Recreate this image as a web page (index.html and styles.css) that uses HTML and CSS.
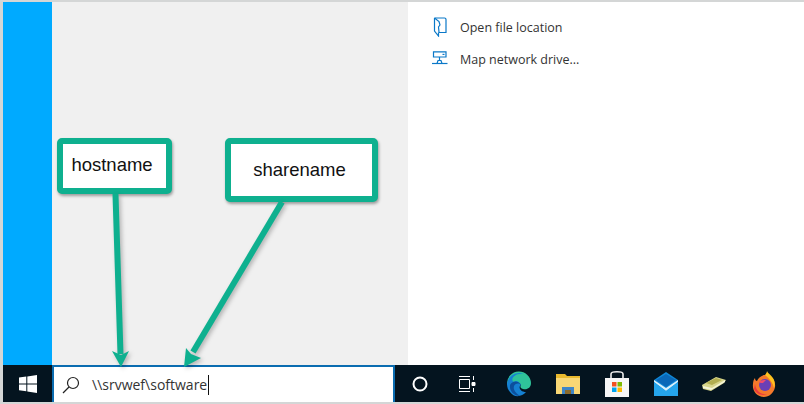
FILE: index.html
```html
<!DOCTYPE html>
<html lang="en">
<head>
    <meta charset="UTF-8">
    <meta name="viewport" content="width=device-width, initial-scale=1.0">
    <title>Search share</title>
    <link rel="stylesheet" href="styles.css">
</head>
<body>
    <div class="screen">
        <div class="menu">
            <div class="tiles"></div>
            <div class="results"></div>
            <div class="actions">
                <div class="action">
                    <svg class="action-icon" width="16" height="20" viewBox="0 0 16 20" fill="none" stroke="#0a78c8" stroke-width="1.2">
                        <path d="M2.500 1H12.500C13.500 1 14 1.500 14 2.500V15.500H6.500"/>
                        <path d="M2.500 1V14L6.500 19V15.500"/>
                        <path d="M2.500 1L7 4.500L8 8L6.500 10L7 15"/>
                    </svg>
                    <span>Open file location</span>
                </div>
                <div class="action">
                    <svg class="action-icon" width="16" height="16" viewBox="0 0 16 16" fill="none" stroke="#0a78c8" stroke-width="1.200">
                        <path d="M1.500 0.800H14V6H1.500Z"/>
                        <path d="M10.500 3.400H12.500"/>
                        <path d="M7.500 6V9M5 12.500L6 9.500H9L10 12.500"/>
                        <path d="M0 12.500H15.500"/>
                    </svg>
                    <span>Map network drive...</span>
                </div>
            </div>
        </div>
        <div class="taskbar">
            <div class="start">
                <svg width="18" height="18" viewBox="0 0 18 18" fill="#fff">
                    <path d="M0 2.600L7.300 1.600V8.400H0Z"/>
                    <path d="M8.300 1.400L18 0V8.400H8.300Z"/>
                    <path d="M0 9.400H7.300V16.300L0 15.300Z"/>
                    <path d="M8.300 9.400H18V18L8.300 16.500Z"/>
                </svg>
            </div>
            <div class="search">
                <svg width="18" height="18" viewBox="0 0 18 18" fill="none" stroke="#222" stroke-width="1.200">
                    <circle cx="11" cy="7" r="5.500"/>
                    <path d="M7 11L1 17"/>
                </svg>
                <span class="query">\\srvwef\software</span>
            </div>
            <div class="tray">
                <svg class="tray-cortana" width="18" height="18" viewBox="0 0 18 18" fill="none" stroke="#fff" stroke-width="2">
                    <circle cx="9" cy="9" r="6.500"/>
                </svg>
                <svg class="tray-view" width="18" height="16" viewBox="0 0 18 16" fill="none" stroke="#fff" stroke-width="1">
                    <path d="M1 .5H12M1 15.500H12M1.500 3.500H11.500V12.500H1.500Z"/>
                    <path d="M15.500 0V4M15.500 12V16"/>
                    <path d="M14 6.500H17V9.500H14Z" fill="#fff"/>
                </svg>
                <svg class="tray-edge" width="26" height="26" viewBox="0 0 26 26">
                    <path d="M1 13A12 12 0 0 1 25 12C25 17 21 19 17 18C14 17 14 15 15 14C13 10 6 10 4 14C3 15 2 15 1 13Z" fill="#2fc39a"/>
                    <path d="M1 13C2 5 10 0 18 3C10 1 3 8 8 11C10 9 13 10 15 14C12 16 14 21 20 21C16 26 8 27 4 21C2 19 1 16 1 13Z" fill="#1580d2"/>
                    <path d="M4 14C6 10 12 9 15 14C13 12 10 12 8 15C7 18 9 22 14 25C8 25 3 20 4 14Z" fill="#0c4f9c"/>
                </svg>
                <svg class="tray-folder" width="24" height="22" viewBox="0 0 24 22">
                    <path d="M0 1H9L11 3H24V21H0Z" fill="#e9b92e"/>
                    <path d="M0 5H24V21H0Z" fill="#f8d775"/>
                    <path d="M6 14H18V21H15V17H9V21H6Z" fill="#3f86c7"/>
                    <path d="M9 17H15V21H9Z" fill="#8a6a2c"/>
                </svg>
                <svg class="tray-store" width="24" height="26" viewBox="0 0 24 26">
                    <path d="M6 8V3C6 1 8 .8 12 .8S18 1 18 3V8" fill="none" stroke="#eee" stroke-width="1.600"/>
                    <path d="M0 7H24V26H0Z" fill="#f6f6f6"/>
                    <path d="M7 11H11.500V15.500H7Z" fill="#f25022"/>
                    <path d="M12.500 11H17V15.500H12.500Z" fill="#7fba00"/>
                    <path d="M7 16.500H11.500V21H7Z" fill="#00a4ef"/>
                    <path d="M12.500 16.500H17V21H12.500Z" fill="#ffb900"/>
                </svg>
                <svg class="tray-mail" width="24" height="24" viewBox="0 0 24 24">
                    <path d="M0 8L12 0L24 8V24H0Z" fill="#1088d8"/>
                    <path d="M2 8L12 2L22 8L12 15Z" fill="#0a68b8"/>
                    <path d="M0 8L12 16L24 8V10L12 19L0 10Z" fill="#d8f0fb"/>
                    <path d="M0 24V10L12 19L24 10V24Z" fill="#25a5ec"/>
                </svg>
                <svg class="tray-book" width="24" height="16" viewBox="0 0 24 16">
                    <path d="M0 9L14 1L24 4L22 7L9 15L1 13Z" fill="#d8d68c"/>
                    <path d="M1 10L10 12L23 4L23 6L9 14L1 12Z" fill="#f4f4d8"/>
                    <path d="M4 7L14 2L20 4L10 9Z" fill="#b2ae50"/>
                </svg>
                <svg class="tray-fox" width="24" height="26" viewBox="0 0 24 26">
                    <path d="M12 4C19 3 24 9 23 16C22 22 17 26 12 26C5 26 0 20 1 13C1 10 2 8 3 7C3 9 4 10 5 10C6 7 9 5 12 4Z" fill="#f4792b"/>
                    <path d="M13 4C14 3 15 1 15 0C16 3 20 4 22 9C23 12 23 15 22 17C21 12 18 8 13 4Z" fill="#ffc21f"/>
                    <path d="M3 13C4 20 9 24 15 23C11 25 5 24 2 18Z" fill="#ec3a3e"/>
                    <circle cx="13" cy="14" r="6" fill="#6a3fb5"/>
                    <path d="M7 11C9 9 12 9 14 9L11 12C9 12 8 12 7 11Z" fill="#f24a6c"/>
                </svg>
            </div>
        </div>

        <div class="callout callout-host">hostname</div>
        <div class="callout callout-share">sharename</div>
        <svg class="arrows" width="804" height="404" viewBox="0 0 804 404" fill="#0eb08f" stroke="none">
            <path d="M115.500 194L120.500 354" stroke="#0eb08f" stroke-width="6"/>
            <path d="M112 351L121 355L129 351L121 367Z"/>
            <path d="M282 202L193 352" stroke="#0eb08f" stroke-width="6"/>
            <path d="M186 348L191 354L201 358L184 367Z"/>
        </svg>
    </div>
</body>
</html>
```

FILE: styles.css
```css
html, body {
    margin: 0;
    padding: 0;
}
body {
    width: 804px;
    height: 404px;
    overflow: hidden;
    background-color: #d4d6d6;
    font-family: "Open Sans", "Noto Sans", sans-serif;
}
.screen {
    position: relative;
    height: 400px;
    padding-top: 2px;
    padding-left: 3px;
    display: flex;
    flex-direction: column;
}
.menu {
    flex: 1;
    display: flex;
    min-height: 0;
}
.tiles {
    width: 49px;
    background-color: #00aaff;
}
.results {
    width: 356px;
    background-color: #f0f0f0;
}
.actions {
    flex: 1;
    background-color: #fff;
    padding-top: 15px;
    display: flex;
    flex-direction: column;
    gap: 12px;
}
.action {
    display: flex;
    align-items: center;
    height: 20px;
    padding-left: 24px;
    font-size: 12.500px;
    color: #333;
}
.action span {
    margin-left: 12px;
}
.action-icon {
    flex: none;
    width: 16px;
}
.taskbar {
    flex: none;
    height: 37px;
    display: flex;
    background-color: #04141f;
}
.start {
    width: 49px;
    display: flex;
    align-items: center;
    justify-content: center;
}
.search {
    box-sizing: border-box;
    width: 343px;
    display: flex;
    align-items: center;
    background-color: #fff;
    border: 2px solid #0a6cb0;
    border-bottom: none;
    padding-left: 8px;
}
.query {
    margin-left: 12px;
    padding-right: 1px;
    border-right: 1px solid #111;
    font-size: 14px;
    line-height: 20px;
    color: #333;
}
.tray {
    flex: 1;
    display: flex;
    align-items: center;
    padding-left: 16px;
}
.tray svg {
    flex: none;
}
.tray-view { margin-left: 29px; }
.tray-edge { margin-left: 30px; }
.tray-folder { margin-left: 24px; }
.tray-store { margin-left: 25px; }
.tray-mail { margin-left: 25px; }
.tray-book { margin-left: 24px; }
.tray-fox { margin-left: 26px; }
.callout {
    position: absolute;
    top: 138px;
    box-sizing: border-box;
    display: flex;
    justify-content: center;
    background-color: #fff;
    border: 6px solid #0eb08f;
    border-radius: 5px;
    box-shadow: 1px 2px 3px rgba(0, 0, 0, 0.35);
    font-family: "Liberation Sans", sans-serif;
    font-size: 18.500px;
    color: #111;
}
.callout-host {
    left: 57px;
    width: 115px;
    height: 56px;
    padding-top: 10px;
    padding-right: 5px;
}
.callout-share {
    left: 225px;
    width: 153px;
    height: 64px;
    padding-top: 15px;
    padding-right: 4px;
}
.arrows {
    position: absolute;
    left: 0;
    top: 0;
    pointer-events: none;
    filter: drop-shadow(2px 2px 2px rgba(0, 0, 0, 0.25));
}
```
